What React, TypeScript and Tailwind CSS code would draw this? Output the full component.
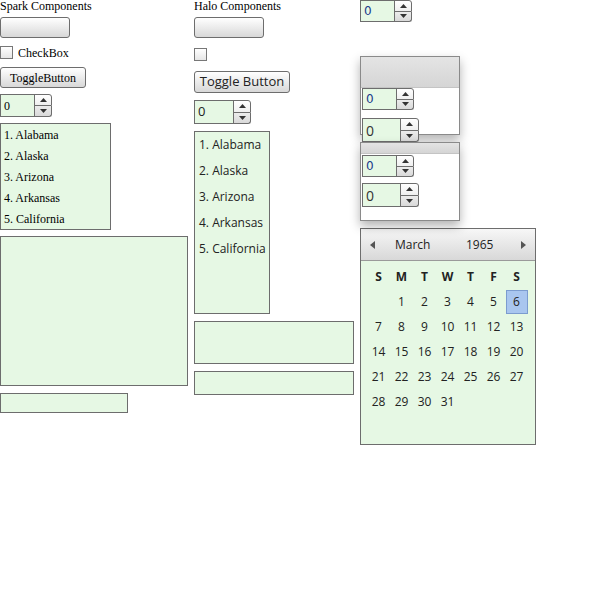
import React from "react";

const serif = "font-['Liberation_Serif',serif]";
const sans = "font-['Open_Sans','DejaVu_Sans',sans-serif]";

function Tri({ up }: { up?: boolean }) {
  return (
    <svg width="7" height="4" viewBox="0 0 7 4">
      {up ? <polygon points="0,4 7,4 3.5,0" fill="#333" /> : <polygon points="0,0 7,0 3.5,4" fill="#333" />}
    </svg>
  );
}

function Stepper({ field, btn, height, text }: { field: string; btn: string; height: string; text: string }) {
  return (
    <div className={`flex ${height}`}>
      <div className={`${field} h-full border border-[#6d6d6d] bg-[#e6f8e4] flex items-center pl-[3px] ${text}`}>0</div>
      <div className={`${btn} h-full flex flex-col -ml-px`}>
        <div className="flex-1 border border-[#6d6d6d] rounded-tr-[3px] bg-linear-to-b from-white to-[#efefef] flex items-center justify-center">
          <Tri up />
        </div>
        <div className="flex-1 border border-t-0 border-[#6d6d6d] rounded-br-[3px] bg-linear-to-b from-[#ececec] to-[#d9d9d9] flex items-center justify-center">
          <Tri />
        </div>
      </div>
    </div>
  );
}

const states = ["1. Alabama", "2. Alaska", "3. Arizona", "4. Arkansas", "5. California"];
const btn = "border border-[#6d6d6d] rounded-[3px] bg-linear-to-b from-white to-[#d8d8d8] flex items-center justify-center";
const box = "border border-[#6d6d6d] bg-[#e6f8e4]";

function Calendar() {
  const cells: (number | null)[] = [null];
  for (let d = 1; d <= 31; d++) cells.push(d);
  const heads = ["S", "M", "T", "W", "T", "F", "S"];
  return (
    <div className={`w-[176px] h-[217px] border border-[#6d6d6d] bg-[#e6f8e4] ${sans} text-[12px] text-[#222]`}>
      <div className="h-[32px] bg-linear-to-b from-[#f7f7f7] to-[#d8d8d8] border-b border-[#9a9a9a] flex items-center px-[9px]">
        <svg width="5" height="8" viewBox="0 0 5 8"><polygon points="5,0 5,8 0,4" fill="#555" /></svg>
        <span className="ml-[20px] w-[71px]">March</span>
        <span>1965</span>
        <span className="flex-1" />
        <svg width="5" height="8" viewBox="0 0 5 8"><polygon points="0,0 0,8 5,4" fill="#555" /></svg>
      </div>
      <div className="grid grid-cols-[repeat(7,23px)] auto-rows-[25px] pl-[6px] pt-[3px]">
        {heads.map((h, i) => (
          <div key={i} className="flex items-center justify-center font-bold">{h}</div>
        ))}
        {cells.map((c, i) => (
          <div key={i} className="flex items-center justify-center">
            {c === 6 ? (
              <div className="w-[22px] h-[24px] bg-[#a9c6ef] border border-[#7c9ccf] flex items-center justify-center">6</div>
            ) : (
              c
            )}
          </div>
        ))}
      </div>
    </div>
  );
}

function Panel({ header, children }: { header: string; children: React.ReactNode }) {
  return (
    <div className="w-[100px] h-[79px] border border-[#8a8a8a] bg-white shadow-[0_5px_10px_rgba(0,0,0,0.3)] flex flex-col">
      <div className={`${header} shrink-0 bg-linear-to-b from-[#e4e4e4] to-[#d5d5d5] border-b border-[#c4c4c4]`} />
      {children}
    </div>
  );
}

export default function App() {
  return (
    <div className="flex w-[600px] h-[600px] bg-white items-start">
      {/* spark */}
      <div className={`w-[188px] flex flex-col items-start ${serif} text-[12px] text-black`}>
        <div className="h-[12px] leading-[12px]">Spark Components</div>
        <div className={`mt-[5px] w-[70px] h-[21px] ${btn}`} />
        <div className="mt-[8px] h-[13px] flex items-center">
          <div className="w-[13px] h-[13px] border border-[#777] bg-linear-to-b from-white to-[#e6e6e6]" />
          <span className="ml-[5px]">CheckBox</span>
        </div>
        <div className={`mt-[8px] w-[86px] h-[21px] ${btn}`}>ToggleButton</div>
        <div className="mt-[6px]">
          <Stepper field="w-[35px]" btn="w-[18px]" height="h-[23px]" text="text-[12px]" />
        </div>
        <div className={`mt-[6px] w-[111px] h-[107px] ${box}`}>
          {states.map((s) => (
            <div key={s} className="h-[21px] flex items-center pl-[3px]">{s}</div>
          ))}
        </div>
        <div className={`mt-[6px] w-[188px] h-[150px] ${box}`} />
        <div className={`mt-[7px] w-[128px] h-[20px] ${box}`} />
      </div>

      {/* halo */}
      <div className={`ml-[6px] w-[160px] flex flex-col items-start text-[12px] text-[#222]`}>
        <div className={`h-[12px] leading-[12px] ${serif} text-black`}>Halo Components</div>
        <div className={`mt-[5px] w-[70px] h-[21px] ${btn}`} />
        <div className="mt-[10px] w-[13px] h-[13px] border border-[#777] bg-linear-to-b from-white to-[#e6e6e6]" />
        <div className={`mt-[10px] w-[96px] h-[22px] ${btn} ${sans} text-[13px]`}>Toggle Button</div>
        <div className="mt-[7px]">
          <Stepper field="w-[40px]" btn="w-[18px]" height="h-[24px]" text={`${sans} text-[13px]`} />
        </div>
        <div className={`mt-[7px] w-[76px] h-[183px] ${box} ${sans}`}>
          {states.map((s) => (
            <div key={s} className="h-[26px] flex items-center pl-[4px]">{s}</div>
          ))}
        </div>
        <div className={`mt-[7px] w-[160px] h-[43px] ${box}`} />
        <div className={`mt-[7px] w-[160px] h-[24px] ${box}`} />
      </div>

      {/* right */}
      <div className="ml-[6px] flex flex-col items-start">
        <Stepper field="w-[35px]" btn="w-[18px]" height="h-[22px]" text={`font-['DejaVu_Sans',sans-serif] text-[12px] text-[#1a3a8a]`} />
        <div className="mt-[34px]">
          <Panel header="h-[31px]">
            <div className="pl-px">
              <Stepper field="w-[35px]" btn="w-[18px]" height="h-[22px]" text={`font-['DejaVu_Sans',sans-serif] text-[12px] text-[#1a3a8a]`} />
              <div className="mt-[8px]">
                <Stepper field="w-[39px]" btn="w-[19px]" height="h-[24px]" text={`${sans} text-[14px] text-[#333]`} />
              </div>
            </div>
          </Panel>
        </div>
        <div className="mt-[7px] relative z-10">
          <Panel header="h-[11px]">
            <div className="pl-px pt-px">
              <Stepper field="w-[35px]" btn="w-[18px]" height="h-[22px]" text={`font-['DejaVu_Sans',sans-serif] text-[12px] text-[#1a3a8a]`} />
              <div className="mt-[6px]">
                <Stepper field="w-[39px]" btn="w-[19px]" height="h-[24px]" text={`${sans} text-[14px] text-[#333]`} />
              </div>
            </div>
          </Panel>
        </div>
        <div className="mt-[7px]">
          <Calendar />
        </div>
      </div>
    </div>
  );
}
